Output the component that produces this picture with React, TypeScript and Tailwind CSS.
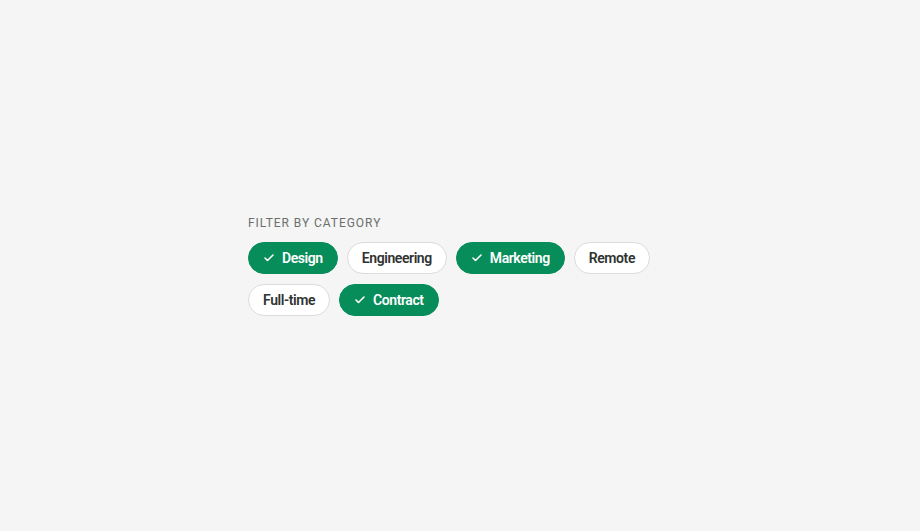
import React, { useState } from 'react';

const categories = [
  { name: 'Design', on: true },
  { name: 'Engineering', on: false },
  { name: 'Marketing', on: true },
  { name: 'Remote', on: false },
  { name: 'Full-time', on: false },
  { name: 'Contract', on: true },
];

const Check = () => (
  <svg width="12" height="12" viewBox="0 0 24 24" fill="none" stroke="currentColor" strokeWidth="3.2" strokeLinecap="round" strokeLinejoin="round">
    <path d="M20 6 9 17l-5-5" />
  </svg>
);

export default function App() {
  const [sel, setSel] = useState(categories.map((c) => c.on));

  return (
    <div className="min-h-screen bg-[#f4f5f4] flex items-center justify-center font-['Roboto',sans-serif]">
      <div className="w-[424px]">
        <div className="text-[12px] leading-[16px] tracking-[0.08em] text-[#6c6f6d] mb-[11px]">FILTER BY CATEGORY</div>
        <div className="flex flex-wrap gap-x-[9px] gap-y-[10px]">
          {categories.map((c, i) => (
            <button
              key={c.name}
              onClick={() => setSel(sel.map((v, j) => (j === i ? !v : v)))}
              className={
                sel[i]
                  ? 'h-[32px] px-[14px] rounded-full flex items-center gap-[7px] bg-[#078d5a] border border-[#078d5a] text-white text-[14px] font-semibold tracking-[-0.03em]'
                  : 'h-[32px] px-[14px] rounded-full flex items-center bg-white border border-[#dadddb] text-[#2f3331] text-[14px] font-semibold tracking-[-0.03em]'
              }
            >
              {sel[i] && <Check />}
              {c.name}
            </button>
          ))}
        </div>
      </div>
    </div>
  );
}
